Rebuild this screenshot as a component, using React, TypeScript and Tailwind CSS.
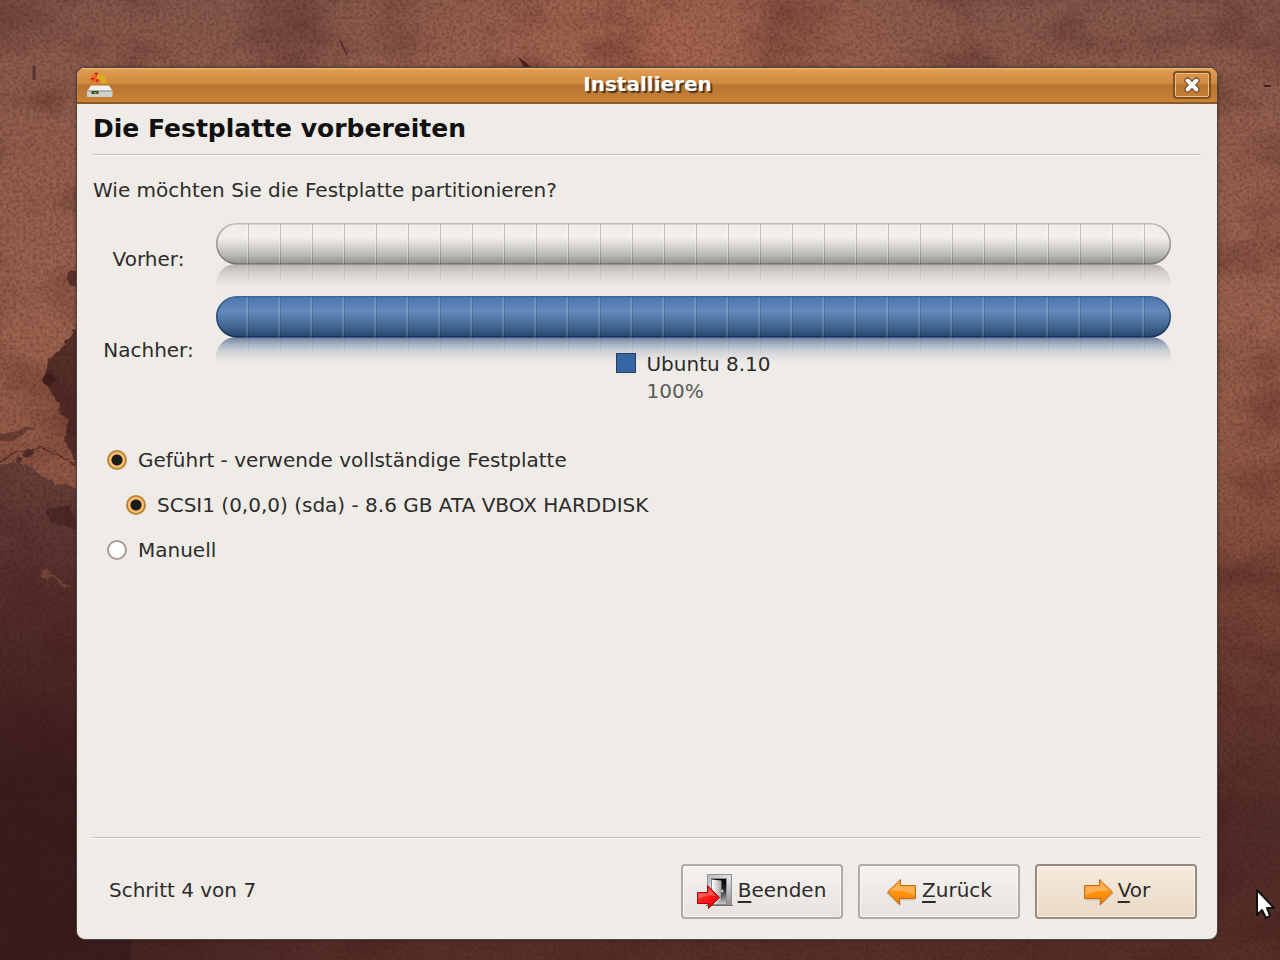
import { useState } from "react";

const field = "font-['DejaVu_Sans',sans-serif]";

function Wallpaper() {
  return (
    <svg
      className="absolute inset-0 h-full w-full"
      viewBox="0 0 1280 960"
      preserveAspectRatio="none"
      aria-hidden="true"
    >
      <defs>
        <linearGradient id="leather" x1="0" y1="0" x2="0" y2="1">
          <stop offset="0" stopColor="#85584b" />
          <stop offset="0.12" stopColor="#935f4e" />
          <stop offset="0.35" stopColor="#9c634e" />
          <stop offset="0.5" stopColor="#905844" />
          <stop offset="0.62" stopColor="#7b4839" />
          <stop offset="0.75" stopColor="#62372e" />
          <stop offset="0.85" stopColor="#522d28" />
          <stop offset="1" stopColor="#58302a" />
        </linearGradient>
        <linearGradient id="stain" x1="0" y1="470" x2="0" y2="960" gradientUnits="userSpaceOnUse">
          <stop offset="0" stopColor="#66403a" />
          <stop offset="0.3" stopColor="#532d29" />
          <stop offset="0.65" stopColor="#3a1d1e" />
          <stop offset="1" stopColor="#3a1d1e" />
        </linearGradient>
        <radialGradient id="glow" cx="650" cy="60" r="330" gradientUnits="userSpaceOnUse">
          <stop offset="0" stopColor="#b06b50" stopOpacity="0.8" />
          <stop offset="1" stopColor="#b06b50" stopOpacity="0" />
        </radialGradient>
        <linearGradient id="fade" x1="0" y1="0" x2="1" y2="0">
          <stop offset="0.05" stopColor="#3a1d1e" stopOpacity="0.9" />
          <stop offset="0.6" stopColor="#3a1d1e" stopOpacity="0" />
        </linearGradient>
        <filter id="grain" x="0" y="0" width="100%" height="100%" colorInterpolationFilters="sRGB">
          <feTurbulence type="fractalNoise" baseFrequency="0.3" numOctaves="3" seed="8" />
          <feColorMatrix values="0 0 0 0 0.18  0 0 0 0 0.06  0 0 0 0 0.06  0.6 0 0 0 -0.22" />
        </filter>
        <filter id="mottle" x="0" y="0" width="100%" height="100%" colorInterpolationFilters="sRGB">
          <feTurbulence type="fractalNoise" baseFrequency="0.012 0.018" numOctaves="4" seed="4" />
          <feColorMatrix values="0 0 0 0 0.25  0 0 0 0 0.08  0 0 0 0 0.08  0.8 0 0 0 -0.34" />
        </filter>
        <filter id="torn" x="-10%" y="-10%" width="120%" height="120%" colorInterpolationFilters="sRGB">
          <feTurbulence type="fractalNoise" baseFrequency="0.09" numOctaves="3" seed="3" result="noise" />
          <feDisplacementMap in="SourceGraphic" in2="noise" scale="9" xChannelSelector="R" yChannelSelector="G" />
        </filter>
      </defs>
      <rect width="1280" height="960" fill="url(#leather)" />
      <rect width="1280" height="400" fill="url(#glow)" />
      <g filter="url(#torn)">
        <path d="M-20 462 L14 462 L30 468 L50 480 L76 488 L130 490 V980 H-20 Z" fill="url(#stain)" />
        <path d="M-20 430 Q14 438 36 424 Q28 436 5 441 L-20 441Z" fill="#6b3f36" />
        <path d="M80 325 L66 340 L60 352 L46 358 L44 380 L54 394 L58 408 L70 420 L64 438 L76 462 H100 V325Z" fill="#55302a" />
        <path d="M-4 462 Q10 454 26 448 Q46 446 76 464" fill="none" stroke="#5a332d" strokeWidth="1.5" />
        <circle cx="74" cy="278" r="7" fill="#633730" />
        <circle cx="49" cy="379" r="6" fill="#3f201d" />
        <circle cx="28" cy="453" r="5" fill="#55302b" />
        <circle cx="21" cy="461" r="3" fill="#55302b" />
        <circle cx="46" cy="574" r="5" fill="#7a4b3f" />
        <path d="M50 576 Q62 578 68 588" fill="none" stroke="#7a4b3f" strokeWidth="2" />
        <path d="M46 516 Q52 500 70 504 L78 528 Q60 530 46 516Z" fill="#3f201e" opacity="0.6" />
      </g>
      <rect y="880" width="600" height="80" fill="url(#fade)" />
      <rect width="1280" height="960" filter="url(#mottle)" />
      <rect width="1280" height="960" filter="url(#grain)" />
      <path d="M518 57 L528 64 L530 68 L524 67Z" fill="#4b201b" />
      <path d="M340 40 L347 55" stroke="#5a332c" strokeWidth="2" />
      <path d="M34 66 V80" stroke="#5a332c" strokeWidth="3" />
      <path d="M1264 86 H1271" stroke="#3f2320" strokeWidth="2" />
    </svg>
  );
}

function Capsule({ id, blue }: { id: string; blue?: boolean }) {
  return (
    <svg className="block h-[67px] w-full" viewBox="0 0 955 67" preserveAspectRatio="none" aria-hidden="true">
      <defs>
        <linearGradient id={id + "-fill"} x1="0" y1="0" x2="0" y2="1">
          <stop offset="0" stopColor={blue ? "#4b76ad" : "#efecea"} />
          <stop offset="0.35" stopColor={blue ? "#6489bb" : "#f2eeeb"} />
          <stop offset="0.5" stopColor={blue ? "#587eb0" : "#dfddd9"} />
          <stop offset="0.75" stopColor={blue ? "#42658f" : "#bebdb8"} />
          <stop offset="1" stopColor={blue ? "#26466f" : "#94938e"} />
        </linearGradient>
        <linearGradient id={id + "-edge"} x1="0" y1="0" x2="0" y2="1">
          <stop offset="0" stopColor={blue ? "#3f659a" : "#bdb9b4"} />
          <stop offset="1" stopColor={blue ? "#18315a" : "#777570"} />
        </linearGradient>
        <linearGradient id={id + "-mirror"} x1="0" y1="0" x2="0" y2="1">
          <stop offset="0" stopColor={blue ? "#506b90" : "#9c9793"} stopOpacity={blue ? "0.85" : "0.7"} />
          <stop offset="0.5" stopColor={blue ? "#8497b3" : "#bdb8b3"} stopOpacity="0.35" />
          <stop offset="1" stopColor={blue ? "#a5b2c5" : "#d5d0cb"} stopOpacity="0" />
        </linearGradient>
        <pattern id={id + "-cells"} x={blue ? 1 : 0} y="0" width="32" height="67" patternUnits="userSpaceOnUse">
          <rect x={blue ? 29 : 31} width={blue ? 2 : 1} height="67" fill="#fff" opacity={blue ? 0.14 : 0.25} />
          <rect x={blue ? 31 : 0} width="1" height="67" fill="#000" opacity={blue ? 0.12 : 0.18} />
        </pattern>
      </defs>
      <path d="M0 67 V61 A20 20 0 0 1 20 41 H935 A20 20 0 0 1 955 61 V67Z" fill={"url(#" + id + "-mirror)"} />
      <rect
        x="0.75"
        y="0.75"
        width="953.5"
        height="40"
        rx="20"
        fill={"url(#" + id + "-fill)"}
        stroke={"url(#" + id + "-edge)"}
        strokeWidth="1.5"
      />
      <rect x="20" y="1" width="915" height="40" fill={"url(#" + id + "-cells)"} />
      <rect x="20" y="42" width="915" height="16" fill={"url(#" + id + "-cells)"} opacity="0.35" />
    </svg>
  );
}

function DriveIcon() {
  return (
    <svg className="h-7 w-7" viewBox="0 0 28 28" aria-hidden="true">
      <path d="M2.500 8.500 L6 7 L5 3.500 L9 4.500 L11 1 L13 4 L10 7 L12 12 L8 11 L5 12 L6 9Z" fill="#ee6a1c" />
      <path d="M11 3 Q18 2 21.500 12 L17 13 Q15 8 11 8Z" fill="#dcae1c" />
      <path d="M7.500 2 L12 1.500 L11 5Z M4.500 7 L9 6.500 L7 10Z M9.500 8 L13.500 8.500 L11 12Z" fill="#d8231c" />
      <path d="M5 14.500 H23 L26.500 20 H1.500Z" fill="#f3f2ef" />
      <rect x="1" y="19.500" width="25.500" height="6.500" rx="1" fill="#d0d0cd" />
      <path d="M1.500 20 H26" stroke="#888883" />
      <rect x="5.500" y="20" width="7" height="3" fill="#3d4a31" />
      <rect x="8" y="21" width="2.500" height="1.500" fill="#70c321" />
    </svg>
  );
}

function ExitIcon() {
  return (
    <svg className="-ml-1 h-10 w-10" viewBox="0 0 40 40" aria-hidden="true">
      <defs>
        <linearGradient id="frame" x1="0" y1="0" x2="1" y2="1">
          <stop offset="0" stopColor="#b9b9bd" />
          <stop offset="0.5" stopColor="#e3e3e8" />
          <stop offset="1" stopColor="#84848a" />
        </linearGradient>
        <linearGradient id="dark" x1="0" y1="0" x2="0" y2="1">
          <stop offset="0" stopColor="#000" />
          <stop offset="0.4" stopColor="#222" />
          <stop offset="1" stopColor="#ccc" />
        </linearGradient>
        <linearGradient id="door" x1="0" y1="0" x2="1" y2="0">
          <stop offset="0" stopColor="#fff" />
          <stop offset="1" stopColor="#a9a9aa" />
        </linearGradient>
        <linearGradient id="red" x1="0" y1="0" x2="1" y2="1">
          <stop offset="0" stopColor="#ee4444" />
          <stop offset="0.5" stopColor="#ff1717" />
          <stop offset="1" stopColor="#c80000" />
        </linearGradient>
      </defs>
      <rect x="13.500" y="2.500" width="24" height="31" fill="url(#frame)" stroke="#929297" />
      <rect x="17.500" y="6.500" width="15" height="26" fill="url(#dark)" stroke="#88888c" />
      <path d="M18 7.500 L27 8.500 V28 L22 32 H18Z" fill="url(#door)" />
      <path d="M27.500 8.500 V27" stroke="#555" />
      <circle cx="28" cy="19" r="1.500" fill="#e5e5e5" stroke="#555" strokeWidth="0.5" />
      <path d="M12 33.500 H39" stroke="#6f6f73" />
      <path d="M3.500 20.500 H13.500 V13.500 L25.500 25.500 L14.500 36.500 V31.500 H3.500Z" fill="url(#red)" stroke="#a40808" strokeLinejoin="round" />
      <path d="M4.500 21.500 H14.500 V16 L22 24 Q12 22 4.500 27Z" fill="#fff" opacity="0.25" />
    </svg>
  );
}

function ArrowIcon({ back }: { back?: boolean }) {
  return (
    <svg className="mb-1 h-8 w-8" viewBox="0 0 32 32" aria-hidden="true">
      <defs>
        <linearGradient id="amber" x1="0" y1="0" x2="0" y2="1">
          <stop offset="0" stopColor="#ff9632" />
          <stop offset="0.6" stopColor="#ff9308" />
          <stop offset="1" stopColor="#f27a00" />
        </linearGradient>
      </defs>
      <g transform={back ? "matrix(-1 0 0 1 32 0)" : undefined}>
        <path d="M3 25.500 H18 V31 L31 19" fill="none" stroke="#000" strokeWidth="2" opacity="0.12" />
        <path
          d="M2.500 11.500 H17.500 V5.500 L30.500 18 L18.500 30.500 V24.500 H2.500Z"
          fill="url(#amber)"
          stroke="#c96814"
          strokeLinejoin="round"
        />
        <path d="M3.500 12.500 H18.500 V8 L28 17 Q13 16 3.500 21.500Z" fill="#fff" opacity="0.27" />
      </g>
    </svg>
  );
}

function Choice({
  label,
  value,
  group,
  checked,
  onChange,
  indent,
}: {
  label: string;
  value: string;
  group: string;
  checked: boolean;
  onChange: () => void;
  indent?: boolean;
}) {
  return (
    <label className={indent ? "ml-[19px] flex h-[45px] items-center gap-[11px]" : "flex h-[45px] items-center gap-[11px]"}>
      <input
        type="radio"
        name={group}
        value={value}
        checked={checked}
        onChange={onChange}
        className="h-5 w-5 shrink-0 appearance-none rounded-full border-2 border-[#a39b93] bg-white checked:border-[#b88442] checked:bg-[radial-gradient(circle,#1c1c1c_0_5px,#ffbf6b_6px)] checked:bg-origin-border"
      />
      {label}
    </label>
  );
}

const button =
  "flex h-[55px] w-[162px] items-center justify-center gap-1 rounded-[4px] border-2 shadow-[inset_0_0_0_1px_#ffffff99]";

export default function App() {
  const [mode, setMode] = useState("disk");
  return (
    <main className={field + " relative flex min-h-screen overflow-hidden pt-[67px] pr-[62px] pb-[20px] pl-[76px] text-xl leading-6 text-[#2c2c2c]"}>
      <Wallpaper />
      <section className="relative flex flex-1 flex-col overflow-hidden rounded-[9px] border border-[#4e4741] bg-[#efebe7] shadow-[0_0_3px_#0006]">
        <header className="flex h-9 items-center border-b-2 border-[#8a5a2a] bg-[linear-gradient(#f0bb80_0,#e19b50_2px,#d08a40_45%,#b87430_50%,#cb8236_100%)] pr-[6px] pl-[9px]">
          <DriveIcon />
          <h1 className="flex-1 pb-[2px] pl-2 text-center font-bold text-white [text-shadow:2px_2px_1px_#4a3520]">Installieren</h1>
          <button
            type="button"
            aria-label="Schließen"
            className="flex h-[28px] w-[38px] items-center justify-center rounded-[4px] border-2 border-[#80501f] shadow-[inset_0_0_0_1px_#efbd8a]"
          >
            <svg className="h-4 w-4" viewBox="0 0 16 16" aria-hidden="true">
              <path d="M3.500 3.500 L12.500 12.500 M12.500 3.500 L3.500 12.500" stroke="#5b3b1b" strokeWidth="6" strokeLinecap="round" />
              <path d="M3.500 3.500 L12.500 12.500 M12.500 3.500 L3.500 12.500" stroke="#fff" strokeWidth="4" strokeLinecap="round" />
            </svg>
          </button>
        </header>
        <div className="flex flex-1 flex-col px-4">
          <h2 className="border-b border-[#c4bbb3] pt-[10px] pb-[10px] text-[25px] leading-[30px] font-bold text-[#111] shadow-[0_1px_0_#fff]">
            Die Festplatte vorbereiten
          </h2>
          <p className="mt-[23px]">Wie möchten Sie die Festplatte partitionieren?</p>
          <div className="mt-[21px] mr-[30px] grid grid-cols-[115px_1fr] gap-x-2">
            <span className="mt-6 pr-1 text-center">Vorher:</span>
            <Capsule id="before" />
            <span className="mt-12 pr-1 text-center">Nachher:</span>
            <div className="mt-[6px]">
              <Capsule id="after" blue />
              <div className="-mt-[11px] flex items-start justify-center gap-[10px]">
                <span className="mt-px h-5 w-5 border border-[#2b3f5c] bg-[#3465a4]" />
                <div>
                  <div>Ubuntu 8.10</div>
                  <div className="mt-[3px] text-[#5a5a5a]">100%</div>
                </div>
              </div>
            </div>
          </div>
          <div className="mt-[34px] ml-[14px]" role="radiogroup" aria-label="Partitionierung">
            <Choice
              label="Geführt - verwende vollständige Festplatte"
              group="mode"
              value="disk"
              checked={mode === "disk"}
              onChange={() => setMode("disk")}
            />
            <Choice
              label="SCSI1 (0,0,0) (sda) - 8.6 GB ATA VBOX HARDDISK"
              group="drive"
              value="sda"
              checked
              onChange={() => {}}
              indent
            />
            <Choice label="Manuell" group="mode" value="manual" checked={mode === "manual"} onChange={() => setMode("manual")} />
          </div>
          <footer className="mt-auto flex items-center gap-[15px] border-t border-[#c4bbb3] pt-[26px] pr-1 pb-5 pl-4 shadow-[inset_0_1px_0_#fff]">
            <span className="flex-1 pb-[3px]">Schritt 4 von 7</span>
            <button type="button" className={button + " border-[#b2aaa3] bg-linear-to-b from-[#f5f3f1] to-[#e8e2dd]"}>
              <ExitIcon />
              <span className="pb-[3px]">
                <u className="underline-offset-4">B</u>eenden
              </span>
            </button>
            <button type="button" className={button + " border-[#b2aaa3] bg-linear-to-b from-[#f5f3f1] to-[#e8e2dd]"}>
              <ArrowIcon back />
              <span className="pb-[3px]">
                <u className="underline-offset-4">Z</u>urück
              </span>
            </button>
            <button type="button" className={button + " border-[#998b7c] bg-linear-to-b from-[#f6ebdf] to-[#ead9c4]"}>
              <ArrowIcon />
              <span className="pb-[3px]">
                <u className="underline-offset-4">V</u>or
              </span>
            </button>
          </footer>
        </div>
      </section>
      <svg className="absolute top-[888px] left-[1255px] h-8 w-6" viewBox="0 0 24 32" aria-hidden="true">
        <path d="M2 2 L2 27 L7 22 L11 30 L15 28 L12 20 H19Z" fill="#fff" stroke="#111" strokeWidth="2" strokeLinejoin="round" />
      </svg>
    </main>
  );
}
